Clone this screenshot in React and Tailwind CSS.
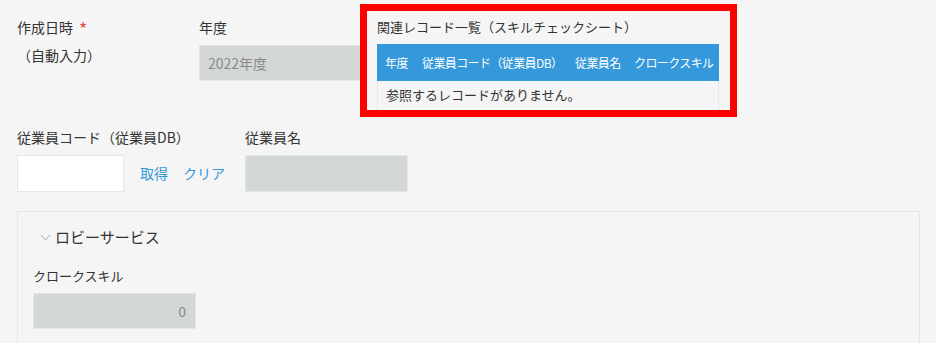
export default function App() {
  const font = { fontFamily: '"Noto Sans CJK JP", "Noto Sans", sans-serif' };
  return (
    <div className="w-[936px] h-[343px] overflow-hidden bg-[#f5f5f5] text-[#333]" style={font}>
      <div className="pl-[17px] pt-[17px]">
        {/* Row 1 */}
        <div className="flex items-start">
          <div className="w-[182px] shrink-0">
            <div className="h-5 leading-5 text-[14px] flex items-center">
              作成日時<span className="ml-[6px] text-[#e74c3c] text-[18px] leading-5 mt-[2px]">*</span>
            </div>
            <div className="mt-2 h-9 text-[14px] leading-5">（自動入力）</div>
          </div>
          <div className="w-[163px] shrink-0">
            <div className="h-5 leading-5 text-[14px]">年度</div>
            <div className="mt-2 h-9 bg-[#d4d7d7] border border-[#e3e7e8] flex items-center pl-2 text-[14px] text-[#888]">
              2022年度
            </div>
          </div>
          <div className="relative ml-[15px] w-[342px] shrink-0">
            <div className="h-5 leading-5 text-[13px]">関連レコード一覧（スキルチェックシート）</div>
            <div className="mt-[7px]">
              <div className="flex h-[37px] bg-[#3498db] text-white text-[12px] tracking-[-0.6px] font-normal items-center whitespace-nowrap">
                <div className="w-[37px] pl-2">年度</div>
                <div className="w-[153px] pl-2">従業員コード（従業員DB）</div>
                <div className="w-[59px] pl-2">従業員名</div>
                <div className="w-[93px] pl-2">クロークスキル</div>
              </div>
              <div className="h-[30px] border-x border-b border-[#e3e7e8] pl-2 pt-[4px] text-[13px] leading-5">
                参照するレコードがありません。
              </div>
            </div>
            <div className="absolute left-[-17px] right-[-18px] top-[-13px] bottom-[-6px] border-[7px] border-[#ff0000] pointer-events-none"></div>
          </div>
        </div>

        {/* Row 2 */}
        <div className="flex items-start mt-4">
          <div className="w-[228px] shrink-0">
            <div className="h-5 leading-5 text-[14px]">従業員コード（従業員DB）</div>
            <div className="mt-2 flex items-center">
              <div className="w-[107px] h-[37px] bg-white border border-[#e3e7e8]"></div>
              <span className="ml-4 text-[14px] text-[#3498db]">取得</span>
              <span className="ml-[15px] text-[14px] text-[#3498db]">クリア</span>
            </div>
          </div>
          <div className="w-[163px] shrink-0">
            <div className="h-5 leading-5 text-[14px]">従業員名</div>
            <div className="mt-2 h-[37px] bg-[#d4d7d7] border border-[#e3e7e8]"></div>
          </div>
        </div>

        {/* Group */}
        <div className="mt-[19px] w-[903px] h-[200px] border border-[#e3e7e8] pl-[15px] pt-[13px]">
          <div className="flex items-center h-6 ml-[7px] text-[15px] leading-6">
            <svg width="11" height="7" viewBox="0 0 11 7" className="mr-[4px] mt-[1px]">
              <polyline points="1,1 5.5,6 10,1" fill="none" stroke="#aaa" strokeWidth="1" />
            </svg>
            ロビーサービス
          </div>
          <div className="mt-[17px] h-5 leading-5 text-[13px]">クロークスキル</div>
          <div className="mt-[7px] w-[163px] h-9 bg-[#d4d7d7] border border-[#e3e7e8] flex items-center justify-end pr-[9px] text-[14px] text-[#888]">
            0
          </div>
        </div>
      </div>
    </div>
  );
}
